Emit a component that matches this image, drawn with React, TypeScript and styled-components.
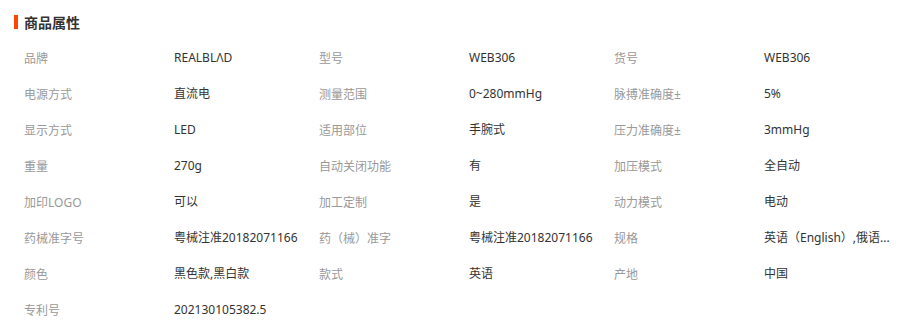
import { Fragment } from "react";
import styled, { createGlobalStyle } from "styled-components";

const GlobalStyle = createGlobalStyle`
  html, body {
    margin: 0;
    padding: 0;
    background: #fff;
  }
  body {
    font-family: "Noto Sans", "Noto Sans CJK SC", sans-serif;
  }
`;

type Attr = { label: string; value: string };

const attrs: Attr[] = [
  { label: "品牌", value: "REALBLΛD" },
  { label: "型号", value: "WEB306" },
  { label: "货号", value: "WEB306" },
  { label: "电源方式", value: "直流电" },
  { label: "测量范围", value: "0~280mmHg" },
  { label: "脉搏准确度±", value: "5%" },
  { label: "显示方式", value: "LED" },
  { label: "适用部位", value: "手腕式" },
  { label: "压力准确度±", value: "3mmHg" },
  { label: "重量", value: "270g" },
  { label: "自动关闭功能", value: "有" },
  { label: "加压模式", value: "全自动" },
  { label: "加印LOGO", value: "可以" },
  { label: "加工定制", value: "是" },
  { label: "动力模式", value: "电动" },
  { label: "药械准字号", value: "粤械注准20182071166" },
  { label: "药（械）准字", value: "粤械注准20182071166" },
  { label: "规格", value: "英语（English）,俄语..." },
  { label: "颜色", value: "黑色款,黑白款" },
  { label: "款式", value: "英语" },
  { label: "产地", value: "中国" },
  { label: "专利号", value: "202130105382.5" },
];

const Section = styled.section`
  width: 924px;
  height: 328px;
  overflow: hidden;
  box-sizing: border-box;
  padding: 12px 0 0 14px;
`;

const Title = styled.h3`
  display: flex;
  align-items: center;
  gap: 6px;
  margin: 0;
  height: 20px;
  font-size: 14px;
  font-weight: bold;
  color: #333;
  &::before {
    content: "";
    width: 4px;
    height: 14px;
    background: #ff4400;
  }
`;

const Grid = styled.dl`
  display: grid;
  grid-template-columns: repeat(3, 150px 145px);
  grid-auto-rows: 36px;
  margin: 8px 0 0 10px;
  font-size: 12px;
`;

const Label = styled.dt`
  display: flex;
  align-items: center;
  color: #999;
  margin: 0;
`;

const Value = styled.dd`
  margin: 0;
  color: #333;
  line-height: 36px;
  white-space: nowrap;
`;

export default function App() {
  return (
    <>
      <GlobalStyle />
      <Section>
        <Title>商品属性</Title>
        <Grid>
          {attrs.map((a) => (
            <Fragment key={a.label}>
              <Label>{a.label}</Label>
              <Value>{a.value}</Value>
            </Fragment>
          ))}
        </Grid>
      </Section>
    </>
  );
}
